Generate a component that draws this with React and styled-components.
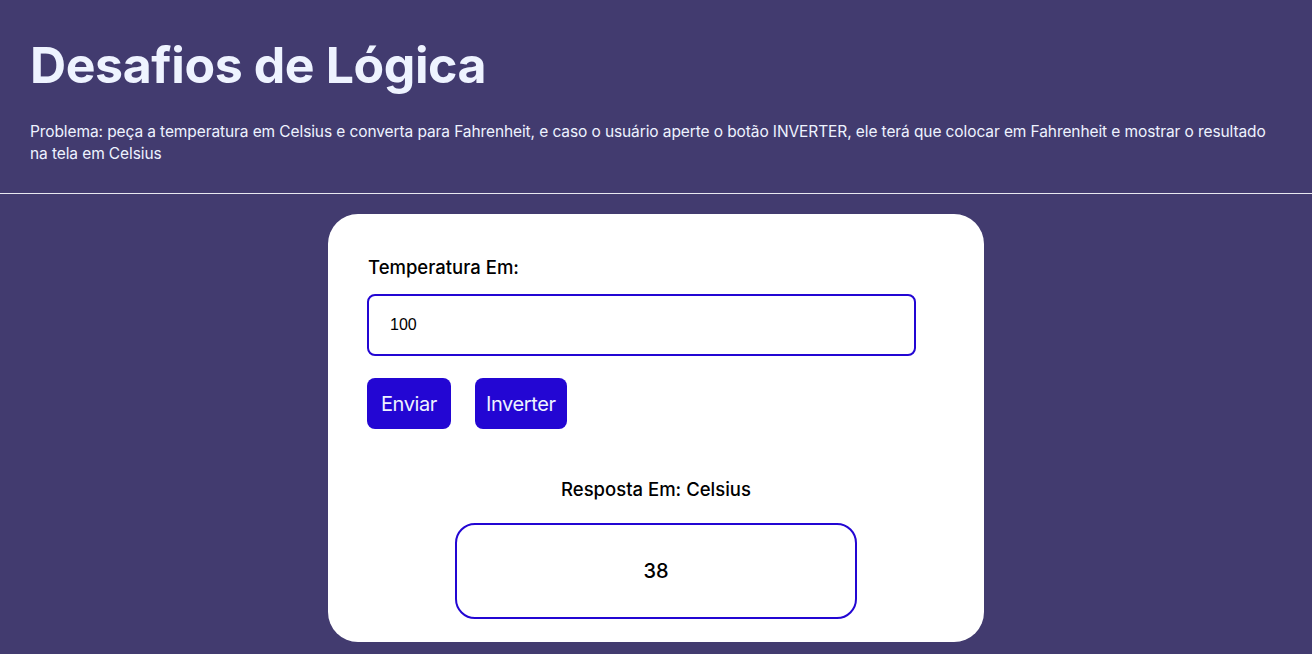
import styled, { createGlobalStyle } from "styled-components";

const Global = createGlobalStyle`
    html, body {
        margin: 0;
        padding: 0;
        background-color: #423b6f;
        font-family: Inter, "Noto Sans", sans-serif;
    }
`;

const Header = styled.header`
    padding: 30px 30px 28px;
    color: #eef3ff;
    border-bottom: 1px solid #e8e8f0;
`;

const Title = styled.h1`
    margin: 0;
    font-size: 50px;
    font-weight: 700;
    line-height: 70px;
    letter-spacing: -0.4px;
`;

const Desc = styled.p`
    margin: 21px 0 0;
    font-size: 15.5px;
    line-height: 22px;
    letter-spacing: -0.1px;
    padding-right: 10px;
`;

const Main = styled.main`
    display: flex;
    justify-content: center;
    padding-top: 20px;
`;

const Card = styled.section`
    width: 656px;
    box-sizing: border-box;
    background: #fff;
    border-radius: 30px;
    padding: 42px 39px 23px;
    display: flex;
    flex-direction: column;
`;

const Label = styled.label`
    font-size: 18.5px;
    font-weight: 500;
    color: #000;
    letter-spacing: 0;
    align-self: ${(p) => (p.center ? "center" : "flex-start")};
    margin-left: ${(p) => (p.center ? "0" : "1px")};
`;

const Input = styled.input`
    margin-top: 16px;
    width: 549px;
    height: 62px;
    box-sizing: border-box;
    border: 2px solid #2306d3;
    border-radius: 8px;
    padding: 0 21px;
    font-family: "Liberation Sans", Arial, sans-serif;
    font-size: 16px;
    color: #000;
    outline: none;
`;

const ButtonRow = styled.div`
    display: flex;
    gap: 24px;
    margin-top: 22px;
    margin-bottom: 49px;
`;

const Button = styled.button`
    height: 51px;
    padding: 0 ${(p) => p.pad || 14}px;
    border: none;
    border-radius: 8px;
    background: #2306d3;
    color: #eef3ff;
    font-family: Inter, "Noto Sans", sans-serif;
    font-size: 20px;
    letter-spacing: -0.4px;
    cursor: pointer;
`;

const Result = styled.div`
    align-self: center;
    margin-top: 23px;
    width: 402px;
    height: 96px;
    flex-shrink: 0;
    box-sizing: border-box;
    border: 2px solid #2306d3;
    border-radius: 20px;
    display: flex;
    align-items: center;
    justify-content: center;
    font-size: 20px;
    font-weight: 500;
    color: #000;
`;

export default function App() {
    return (
        <>
            <Global />
            <Header>
                <Title>Desafios de Lógica</Title>
                <Desc>
                    Problema: peça a temperatura em Celsius e converta para Fahrenheit, e caso o usuário aperte o botão INVERTER, ele terá que colocar em Fahrenheit e mostrar o resultado na tela em Celsius
                </Desc>
            </Header>
            <Main>
                <Card>
                    <Label>Temperatura Em:</Label>
                    <Input type="text" defaultValue="100" />
                    <ButtonRow>
                        <Button pad={14}>Enviar</Button>
                        <Button pad={11}>Inverter</Button>
                    </ButtonRow>
                    <Label center>Resposta Em: Celsius</Label>
                    <Result>38</Result>
                </Card>
            </Main>
        </>
    );
}
